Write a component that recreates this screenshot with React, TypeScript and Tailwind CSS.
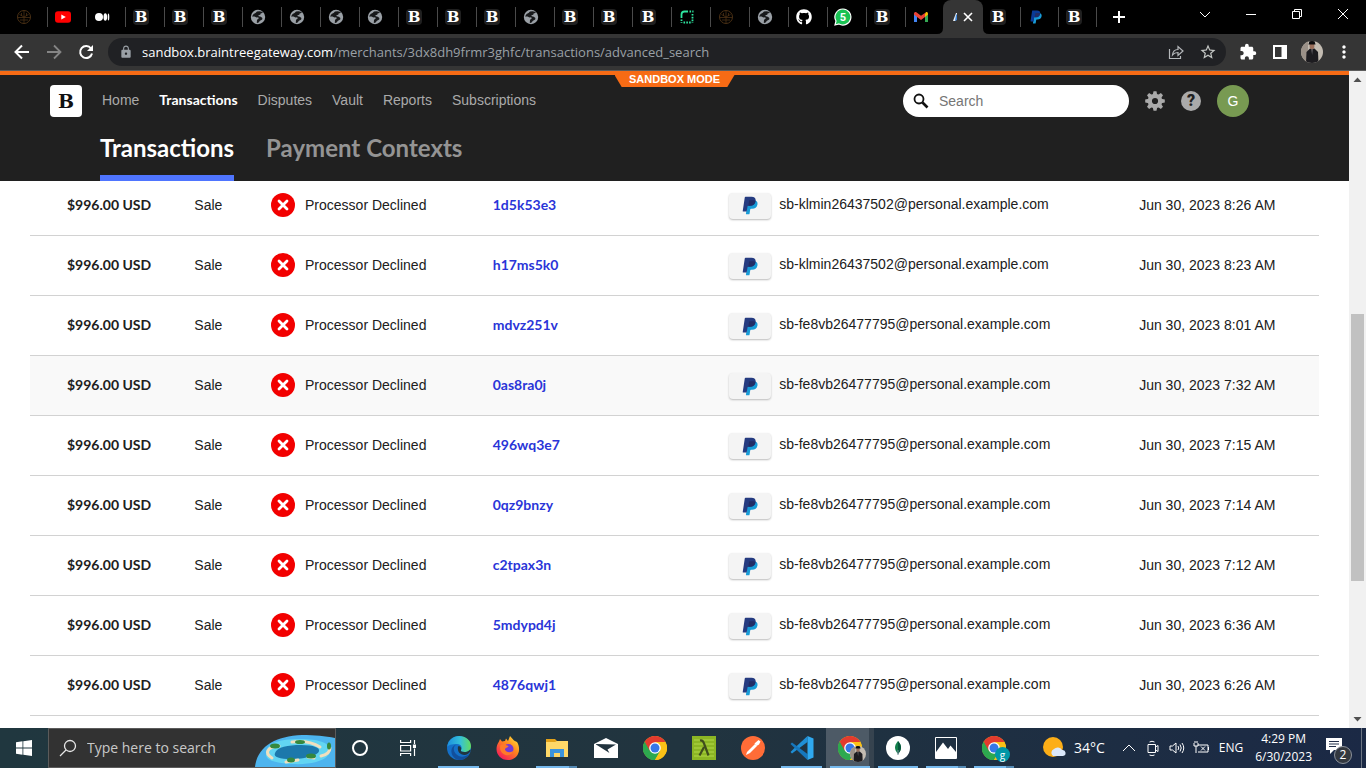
import React from "react";
import { FaGithub } from "react-icons/fa";
import { MdExtension, MdLock, MdMoreVert, MdStarBorder } from "react-icons/md";

type Kind =
  | "dark" | "youtube" | "medium" | "b" | "globe" | "dots" | "github" | "whatsapp" | "gmail" | "paypal";

const leftTabs: Kind[] = [
  "dark", "youtube", "medium", "b", "b", "b", "globe", "globe", "globe", "globe", "b", "b",
  "b", "globe", "b", "b", "b", "dots", "dark", "globe", "github", "whatsapp", "b", "gmail",
];
const rightTabs: Kind[] = ["b", "paypal", "b"];

const k = "sb-klmin26437502@personal.example.com";
const f = "sb-fe8vb26477795@personal.example.com";
const rows = [
  { id: "1d5k53e3", mail: k, time: "8:26 AM" },
  { id: "h17ms5k0", mail: k, time: "8:23 AM" },
  { id: "mdvz251v", mail: f, time: "8:01 AM" },
  { id: "0as8ra0j", mail: f, time: "7:32 AM", hovered: true },
  { id: "496wq3e7", mail: f, time: "7:15 AM" },
  { id: "0qz9bnzy", mail: f, time: "7:14 AM" },
  { id: "c2tpax3n", mail: f, time: "7:12 AM" },
  { id: "5mdypd4j", mail: f, time: "6:36 AM" },
  { id: "4876qwj1", mail: f, time: "6:26 AM" },
];

function PayPal({ className, dark = "#253b80" }: { className?: string; dark?: string }) {
  return (
    <svg viewBox="0 0 24 28" className={className} aria-hidden="true">
      <path d="M9 6h8.500c4.500 0 6.500 2.500 5.700 6.500-.9 4.500-3.800 6.300-8 6.300h-1.700c-.6 0-1 .4-1.100 1l-1.100 6.500c-.1.500-.5.900-1 .9H6.600c-.5 0-.8-.4-.7-.9z" fill="#179bd7" />
      <path d="M5.200 1h9c4.300 0 6.800 2 6.200 6.300-.7 5-3.900 7.200-8.600 7.200H9.400c-.6 0-1 .4-1.100 1L7 23H1.800c-.5 0-.8-.4-.7-.9L4.200 1.800c.1-.5.500-.8 1-.8z" fill={dark} />
      <path d="M10.800 6h6.500c1.300 0 2.300.3 3.100.7-.7 5-3.700 7.800-8.600 7.800H9.500z" fill="#222d65" />
    </svg>
  );
}

function Favicon({ kind }: { kind: Kind }) {
  switch (kind) {
    case "b":
      return (
        <span className="flex size-4 items-center justify-center rounded-sm bg-[#202020] font-['DejaVu_Serif',serif] text-[15px] leading-4 font-bold text-white">
          B
        </span>
      );
    case "youtube":
      return (
        <svg viewBox="0 0 16 16" className="size-4">
          <rect y="2.200" width="16" height="11.600" rx="3" fill="#f00" />
          <path d="m6.300 5.500 4.500 2.500-4.500 2.500z" fill="#fff" />
        </svg>
      );
    case "paypal":
      return <PayPal className="h-3.5 w-4" dark="#0a3a96" />;
    case "github":
      return <FaGithub className="size-4 text-white" />;
    case "medium":
      return (
        <svg viewBox="0 0 16 16" className="size-4">
          <circle cx="5" cy="8" r="4" fill="#fff" />
          <ellipse cx="11.300" cy="8" rx="1.800" ry="3.800" fill="#fff" />
          <ellipse cx="14.500" cy="8" rx=".8" ry="3.500" fill="#fff" />
        </svg>
      );
    case "globe":
      return (
        <svg viewBox="0 0 16 16" className="size-4">
          <circle cx="8" cy="8" r="7.200" fill="#9aa0a6" />
          <path d="M9.500 2.200 7 2.400 5.500 4 3.600 5 2 7.500l2.500.1 2 .9 1.800-.2.300 1.500-1.600 1-.2 3.200 1.500-.2 1.700-2 2.200-1.200.2-1.600-1.600-1.300-2-.4-.5-1.100 2-.4.300-1.200 1.600-.5.700-1.200z" fill="#17181a" />
        </svg>
      );
    case "dark":
      return (
        <svg viewBox="0 0 16 16" className="size-4" fill="none" stroke="#4a3014">
          <circle cx="8" cy="8" r="6.500" />
          <path d="M8 2v12M2 8.500h12M3.500 5.500 8 8l4.500-2.500M4 11h8M5.500 4v3M10.500 4v3" strokeWidth=".8" />
        </svg>
      );
    case "dots":
      return (
        <svg viewBox="0 0 16 16" className="size-4" fill="none" stroke="#2ee6a0" strokeWidth="1.800">
          <path d="M2.500 9V5.500q0-3 3-3H9" />
          <path d="M10.500 2.500h4M13.500 5v9M2.500 10.500V14M4.500 13.500H13" strokeDasharray="1.600 1.200" />
        </svg>
      );
    case "whatsapp":
      return (
        <svg viewBox="0 0 18 18" className="-ml-px size-[18px] shrink-0">
          <path d="M9 1a8 8 0 1 1-4 15L1 17l1-4A8 8 0 0 1 9 1z" fill="#19c253" stroke="#fff" strokeWidth="1.200" />
          <text x="9" y="13" textAnchor="middle" fill="#fff" fontSize="11" fontWeight="700" fontFamily="Roboto, sans-serif">5</text>
        </svg>
      );
    case "gmail":
      return (
        <svg viewBox="0 0 16 16" className="size-4">
          <path d="M1 4.500v8.500h3V7z" fill="#4285f4" />
          <path d="M15 4.500v8.500h-3V7z" fill="#34a853" />
          <path d="M12 4.500 13 3q2-.5 2 1.500v1L12 8z" fill="#fbbc04" />
          <path d="M1 5.500v-1Q1 2.500 3 3l5 3.800L12 4v4l-4 3-4-3z" fill="#ea4335" />
        </svg>
      );
  }
}

function Tab({ kind, narrow, last }: { kind: Kind; narrow?: boolean; last?: boolean }) {
  return (
    <button
      aria-label={`${kind} tab`}
      className={`flex h-5 shrink-0 items-center border-r pl-[7px] ${narrow ? "w-[38px]" : "w-[39px]"} ${last ? "border-transparent" : "border-[#4a4a4a]"}`}
    >
      <Favicon kind={kind} />
    </button>
  );
}

function Portrait({ className }: { className?: string }) {
  return (
    <svg viewBox="0 0 22 22" className={className} aria-hidden="true">
      <defs><clipPath id="portrait"><circle cx="11" cy="11" r="11" /></clipPath></defs>
      <g clipPath="url(#portrait)">
        <path d="M0 0h22v22H0z" fill="#c3bcb2" />
        <path d="M0 0h7v22H0z" fill="#9b9188" />
        <path d="M5 22 5.500 11 9 7.500h4.500L17 11l.5 11z" fill="#1d1c20" />
        <ellipse cx="11" cy="5" rx="2.400" ry="3.200" fill="#9a6f5b" />
        <path d="M7.500 3.500 8.500 0h5l1 3.500z" fill="#0c0c0e" />
        <path d="m10 8 1.200 6L12 8z" fill="#59565a" />
      </g>
    </svg>
  );
}

function BrowserChrome() {
  return (
    <>
      <div className="flex h-[34px] shrink-0 items-center bg-black pl-[9px]">
        {leftTabs.map((kind, i) => (
          <Tab key={i} kind={kind} last={i === leftTabs.length - 1} />
        ))}
        <div className="-ml-2 flex h-full shrink-0 items-end">
          <svg viewBox="0 0 6 6" className="size-[6px] shrink-0"><path d="M6 0v6H0q6 0 6-6" fill="#353535" /></svg>
          <div className="flex h-full w-10 shrink-0 items-center justify-center gap-1.5 rounded-t-lg bg-[#353535]">
            <svg viewBox="0 0 4 10" className="h-2.5 w-1"><path d="M0 9 3 1h1v3L2.500 9z" fill="#e8eef5" /><path d="m3 3 1-1v6l-2 1z" fill="#3b82d6" /></svg>
            <button aria-label="Close tab">
              <svg viewBox="0 0 10 10" className="size-[10px]"><path d="m1 1 8 8M9 1 1 9" stroke="#fff" strokeWidth="1.600" /></svg>
            </button>
          </div>
          <svg viewBox="0 0 6 6" className="size-[6px] shrink-0"><path d="M0 0v6h6q-6 0-6-6" fill="#353535" /></svg>
        </div>
        <div className="-ml-1.5 flex">
          {rightTabs.map((kind, i) => <Tab key={i} kind={kind} narrow />)}
        </div>
        <button aria-label="New tab" className="flex w-11 justify-center">
          <svg viewBox="0 0 12 12" className="size-3"><path d="M6 0v12M0 6h12" stroke="#fff" strokeWidth="2" /></svg>
        </button>
        <div className="ml-auto flex h-7 self-start">
          {[
            ["Search tabs", "m1 4 5 5 5-5"],
            ["Minimize", "M1 6.500h10"],
            ["Restore", "M1.500 3.500h7v7h-7zM3.500 3.500v-2h7v7h-2"],
            ["Close", "m1 1 10 10M11 1 1 11"],
          ].map(([label, d]) => (
            <button key={label} aria-label={label} className="flex w-[46px] items-center justify-center">
              <svg viewBox="0 0 12 12" className="size-3" fill="none" stroke="#fff"><path d={d} /></svg>
            </button>
          ))}
        </div>
      </div>
      <div className="flex h-[37px] shrink-0 items-center border-b border-[#5c5c5c] bg-[#353535] px-1.5 text-white">
        <button aria-label="Back" className="flex w-8 justify-center">
          <svg viewBox="0 0 16 16" className="size-4" fill="none" stroke="#fff" strokeWidth="2"><path d="M15 8H2M8 1.500 1.500 8 8 14.500" /></svg>
        </button>
        <button aria-label="Forward" className="flex w-8 justify-center">
          <svg viewBox="0 0 16 16" className="size-4" fill="none" stroke="#858585" strokeWidth="1.800"><path d="M1 8h13M8 1.500 14.500 8 8 14.500" /></svg>
        </button>
        <button aria-label="Reload" className="flex w-8 justify-center">
          <svg viewBox="0 0 16 16" className="size-4"><path d="M13 4.500A6 6 0 1 0 14 9.500" fill="none" stroke="#fff" strokeWidth="2" /><path d="M15 1v6H9z" fill="#fff" /></svg>
        </button>
        <div className="ml-1.5 flex h-7 flex-1 items-center rounded-full bg-[#202124] pr-2.5 pl-2.5">
          <MdLock className="size-4 p-px text-[#9aa0a6]" />
          <p className="ml-2 flex-1 font-['Open_Sans','Noto_Sans',sans-serif] text-[13px] leading-5 whitespace-nowrap text-[#9aa0a6]">
            <span className="text-white">sandbox.braintreegateway.com</span>/merchants/3dx8dh9frmr3ghfc/transactions/advanced_search
          </p>
          <button aria-label="Share" className="flex w-8 justify-center">
            <svg viewBox="0 0 16 16" className="size-4" fill="none" stroke="#b5b8bb" strokeWidth="1.200"><path d="M1.500 5v9.500h11V12M4.500 11Q5 5.500 10 5.500v-3L15 7l-5 4.500v-3Q6.500 8.500 4.500 11z" /></svg>
          </button>
          <button aria-label="Bookmark" className="-mr-2 flex w-8 justify-center"><MdStarBorder className="size-[18px] text-[#c4c7c5]" /></button>
        </div>
        <div className="ml-1.5 flex">
          <button aria-label="Extensions" className="flex w-8 items-center justify-center"><MdExtension className="size-[18px]" /></button>
          <button aria-label="Side panel" className="flex w-8 items-center justify-center">
            <svg viewBox="0 0 14 14" className="size-3.5"><path d="M1 1h12v12H1z" fill="none" stroke="#fff" strokeWidth="2" /><path d="M8.500 1H13v12H8.500z" fill="#fff" /></svg>
          </button>
          <button aria-label="Profile" className="flex w-8 justify-center"><Portrait className="size-[22px]" /></button>
          <button aria-label="Menu" className="flex w-8 items-center justify-center"><MdMoreVert className="size-5" /></button>
        </div>
      </div>
    </>
  );
}

const teeth = [0, 45, 90, 135, 180, 225, 270, 315];

function Header() {
  return (
    <header className="relative border-t-4 border-[#f76b15] bg-[#202020]">
      <div className="absolute inset-x-0 top-0 mx-auto h-3 w-[120px] bg-[#f76b15] text-center text-[11px] leading-[9px] font-bold text-white [clip-path:polygon(0_0,100%_0,94%_100%,6%_100%)]">
        SANDBOX MODE
      </div>
      <div className="flex items-center pt-2.5 pr-[100px] pl-[50px]">
        <a href="#home" aria-label="Braintree" className="flex size-8 items-center justify-center rounded bg-white font-['DejaVu_Serif',serif] text-[19px] font-bold text-[#111]">
          B
        </a>
        <nav className="ml-5 flex gap-5 pb-0.5 text-[14px] leading-5 text-[#aaa]">
          <a href="#home">Home</a>
          <a href="#transactions" className="font-['Lato',sans-serif] font-bold text-white">Transactions</a>
          <a href="#disputes">Disputes</a>
          <a href="#vault">Vault</a>
          <a href="#reports">Reports</a>
          <a href="#subscriptions">Subscriptions</a>
        </nav>
        <label className="ml-auto flex h-8 w-[226px] items-center rounded-full bg-white pl-2.5">
          <svg viewBox="0 0 16 16" className="size-4 shrink-0" fill="none" stroke="#111"><circle cx="6" cy="6" r="4.500" strokeWidth="1.800" /><path d="m9.500 9.500 5 5" strokeWidth="2.600" /></svg>
          <input type="search" aria-label="Search" placeholder="Search" className="ml-2.5 w-40 text-[14px] leading-5 outline-none placeholder:text-[#757575]" />
        </label>
        <button aria-label="Settings" className="ml-4">
          <svg viewBox="0 0 20 20" className="size-5">
            <circle cx="10" cy="10" r="5.200" fill="none" stroke="#aaa" strokeWidth="4.200" />
            {teeth.map((a) => (
              <path key={a} d="M7.800 3.800 8.500.2h3l.7 3.600z" fill="#aaa" transform={`rotate(${a} 10 10)`} />
            ))}
          </svg>
        </button>
        <button aria-label="Help" className="ml-4 flex size-5 items-center justify-center rounded-full bg-[#aaa] font-['Roboto',sans-serif] text-[16px] leading-5 font-black text-[#202020]">
          ?
        </button>
        <button aria-label="Account" className="ml-4 size-8 rounded-full bg-[#789a52] text-[14px] text-white">G</button>
      </div>
      <div className="flex gap-8 pt-3 pl-[100px] font-['Lato',sans-serif] text-2xl font-bold">
        <a href="#transactions" className="border-b-6 border-[#4f75ff] pt-0.5 pb-2.5 leading-[34px] text-white">Transactions</a>
        <a href="#contexts" className="pt-0.5 leading-[34px] text-[#949494]">Payment Contexts</a>
      </div>
    </header>
  );
}

function TransactionTable() {
  return (
    <div className="min-h-0 flex-1 overflow-hidden bg-white px-[30px]">
      <table className="-mt-[6px] w-full table-fixed border-collapse text-left text-[14px] leading-5 text-[#202020]">
        <colgroup>
          <col className="w-[12.75%]" />
          <col className="w-[5.95%]" />
          <col className="w-[17.2%]" />
          <col className="w-[18.35%]" />
          <col className="w-[31.8%]" />
          <col />
        </colgroup>
        <tbody>
          {rows.map((r) => (
            <tr key={r.id} className={`h-[60px] border-b border-[#d2d2d2] ${r.hovered ? "bg-[#f9f9f9]" : ""}`}>
              <td className="pl-[37px] font-['Lato',sans-serif] font-bold">$996.00 USD</td>
              <td>Sale</td>
              <td>
                <div className="flex items-center gap-2.5">
                  <svg viewBox="0 0 24 24" className="size-6"><circle cx="12" cy="12" r="12" fill="#f20000" /><path d="m8 8 8 8m0-8-8 8" stroke="#fff" strokeWidth="2.800" strokeLinecap="round" /></svg>
                  Processor Declined
                </div>
              </td>
              <td>
                <a href={`#${r.id}`} className="font-['Lato',sans-serif] font-bold text-[#2a35d8]">{r.id}</a>
              </td>
              <td>
                <div className="flex items-center gap-2 pt-0.5">
                  <span className="flex h-[26px] w-[42px] items-center justify-center rounded bg-[#f4f4f4] shadow-[0_1px_2px_#bbb]">
                    <PayPal className="h-[19px] w-4" />
                  </span>
                  <span className="pb-1">{r.mail}</span>
                </div>
              </td>
              <td>Jun 30, 2023 {r.time}</td>
            </tr>
          ))}
        </tbody>
      </table>
    </div>
  );
}

function Scrollbar() {
  return (
    <div className="flex w-[17px] shrink-0 flex-col items-center bg-[#f1f1f1]">
      <svg viewBox="0 0 17 17" className="size-[17px]"><path d="m4.500 11 4-4.500 4 4.500z" fill="#505050" /></svg>
      <div className="flex-[226]" />
      <div className="w-[13px] flex-[267] bg-[#c1c1c1]" />
      <div className="flex-[130]" />
      <svg viewBox="0 0 17 17" className="size-[17px]"><path d="m4.500 6 4 4.500 4-4.500z" fill="#505050" /></svg>
    </div>
  );
}

function Chrome({ badge }: { badge?: "portrait" | "g" }) {
  return (
    <span className="relative">
      <svg viewBox="0 0 24 24" className="size-6">
        <circle cx="12" cy="12" r="12" fill="#fbc116" />
        <path d="M12 12 1.600 6A12 12 0 0 1 22.400 6z" fill="#e33b2e" />
        <path d="M1.600 6A12 12 0 0 0 12 24l5.200-9L12 12z" fill="#2da94f" />
        <path d="M12 6h10.400A12 12 0 0 1 12 24l5.200-9z" fill="#fbc116" />
        <path d="M12 6.500H3L1.600 6 6.800 15z" fill="#e33b2e" />
        <path d="M1.600 6 6.800 15 12 18v6A12 12 0 0 1 1.600 6z" fill="#2da94f" />
        <circle cx="12" cy="12" r="5.800" fill="#fff" />
        <circle cx="12" cy="12" r="4.500" fill="#3777e8" />
      </svg>
      {badge === "portrait" && <Portrait className="absolute -right-1 -bottom-0.5 size-4" />}
      {badge === "g" && (
        <span className="absolute -right-1 -bottom-0.5 flex size-[15px] items-center justify-center rounded-full bg-[#0097a7] text-[10px] leading-3 text-white">g</span>
      )}
    </span>
  );
}

const apps: { name: string; state?: "open" | "many" | "active"; compact?: boolean; icon: React.ReactNode }[] = [
  {
    name: "Edge", state: "open",
    icon: (
      <svg viewBox="0 0 24 24" className="size-6">
        <defs>
          <linearGradient id="edge" x1="0" x2="1"><stop stopColor="#1b8fe0" /><stop offset=".55" stopColor="#35c1d8" /><stop offset="1" stopColor="#63dc60" /></linearGradient>
        </defs>
        <circle cx="12" cy="12" r="12" fill="#1470c8" />
        <path d="M.2 11C1 4 6 0 12 0c7 0 12 4.500 12 10 0 4-3 6-6.500 6-3 0-4-1-3.500-2 1.500-2 .5-6-4-6C5 8 1 9 .2 11z" fill="url(#edge)" />
        <path d="M9.500 8.500C6 10 6 15 9 18s8 4 13 0c-2 4-6 6-10 6C6 23 3 17 5 12q1.500-3 4.500-3.500z" fill="#124f9c" />
        <path d="M11 10.500c2-1 4 1.500 3 3.500-.5 1 .5 2 3.500 2 2 0 4-.7 5.400-2.300l.9.600q-1.800 4.300-5.800 4.600c-4.500.3-8-3-7-8.400z" fill="#21363f" />
      </svg>
    ),
  },
  {
    name: "Firefox",
    icon: (
      <svg viewBox="0 0 24 24" className="size-6">
        <defs>
          <linearGradient id="fox" x1="1" y1="0" x2=".2" y2="1"><stop stopColor="#fff044" /><stop offset=".45" stopColor="#ff8a1c" /><stop offset="1" stopColor="#f5155c" /></linearGradient>
        </defs>
        <path d="M3 5.500 4 3l2 2.500 3-.5 1-2.500L12 5l2-5 4 4.500L21 6c2 3 3 8 1 12-2 4-6 6-10 6C5 24 .5 19 .5 13c0-3 1-5 2.500-7.500z" fill="url(#fox)" />
        <circle cx="12.500" cy="13" r="5" fill="#7139d6" />
        <path d="M4.500 9c4-2 5 .5 8 1-.5 2-3.500 1.500-3.500 3.500 1 3 5 3.500 8 1.500-1 4-6 5.500-9.500 3S3.500 12 4.500 9z" fill="#ff7a28" />
      </svg>
    ),
  },
  {
    name: "File Explorer", state: "many",
    icon: (
      <svg viewBox="0 0 24 24" className="size-6">
        <path d="M1 3h9l2 2h11v16H1z" fill="#e3a21a" /><path d="M1 6h9l2-1h11v16H1z" fill="#ffd868" />
        <path d="M5 13h14v8h-4v-4H9v4H5z" fill="#3c94dc" />
      </svg>
    ),
  },
  {
    name: "Mail",
    icon: (
      <svg viewBox="0 0 24 20" className="h-5 w-6"><path d="M0 6 12 0l12 6v14H0z" fill="#fff" /><path d="m2 6 20 .5-8.500 5 2 3.500L2 6.500z" fill="#22343f" /></svg>
    ),
  },
  { name: "Chrome", icon: <Chrome /> },
  {
    name: "Lambda editor",
    icon: (
      <svg viewBox="0 0 24 24" className="size-6">
        <path d="M0 0h24v24H0z" fill="#8cb624" /><path d="M2 4h20M2 8h20M2 12h20M2 16h20M2 20h20" stroke="#a5cd3c" strokeWidth="1.500" />
        <path d="M8 4.500q3-.5 4 3l4.500 12M12 11l-4.500 8.500" fill="none" stroke="#3f4d1d" strokeWidth="2.200" />
      </svg>
    ),
  },
  {
    name: "Postman",
    icon: (
      <svg viewBox="0 0 24 24" className="size-6"><circle cx="12" cy="12" r="12" fill="#ff6c37" /><path d="m5 19 1-3 8-8 2 2-7 7z" fill="#fff" /><path d="m13.500 7.500 2 2.500 2.500-1.500 1.500-3-2-1.500z" fill="#fff" /></svg>
    ),
  },
  {
    name: "Code", state: "open",
    icon: (
      <svg viewBox="0 0 24 24" className="size-6"><path d="M17.500 0 4 12.500.5 16 2 17.500 17.500 6z" fill="#1f8fd6" /><path d="M17.500 24 .5 8 2 6.500 17.500 18z" fill="#1677bd" /><path d="m17.500 0 6 2.500v19l-6 2.500z" fill="#2fa9f0" /></svg>
    ),
  },
  { name: "Chrome profile", state: "active", compact: true, icon: <Chrome badge="portrait" /> },
  {
    name: "MongoDB Compass", state: "open", compact: true,
    icon: (
      <svg viewBox="0 0 24 24" className="size-6"><circle cx="12" cy="12" r="12" fill="#fff" /><path d="M12 5c4 4.500 4 8.500 0 13-4-4.500-4-8.500 0-13z" fill="#13804c" /><path d="M12 5c4 4.500 4 8.500 0 13z" fill="#07573c" /><path d="M12 14v5" stroke="#789" /></svg>
    ),
  },
  {
    name: "Photos", state: "many", compact: true,
    icon: (
      <svg viewBox="0 0 24 24" className="size-6"><path d="M1.500 1.500h21v21h-21z" fill="none" stroke="#fff" /><path d="M2 16 9 6.500l5 6.500 2.500-3.500L22 16v6H2z" fill="#fff" /></svg>
    ),
  },
  { name: "Chrome G", state: "many", compact: true, icon: <Chrome badge="g" /> },
];

function Taskbar() {
  return (
    <footer className="flex h-10 shrink-0 items-stretch bg-linear-to-r from-[#20373f] via-[#21343f] to-[#1b2945] font-['Open_Sans','Noto_Sans',sans-serif] text-white">
      <button aria-label="Start" className="flex w-12 shrink-0 items-center justify-center">
        <svg viewBox="0 0 16 16" className="size-4" fill="#fff"><path d="M0 2.200 6.500 1.300v6.200H0zM7.300 1.200 16 0v7.500H7.300zM0 8.400h6.500v6.300L0 13.800zM7.300 8.400H16V16l-8.700-1.200z" /></svg>
      </button>
      <label className="flex w-72 shrink-0 items-center border border-[#5b5b5b] bg-[#323232] pl-2.5">
        <svg viewBox="0 0 18 18" className="size-[18px] shrink-0" fill="none" stroke="#e6e6e6" strokeWidth="1.300"><circle cx="11" cy="7" r="5.500" /><path d="m7 11-6 6" /></svg>
        <input aria-label="Search Windows" placeholder="Type here to search" className="ml-2.5 w-40 min-w-0 flex-1 text-[14px] leading-5 outline-none placeholder:text-[#c9c9c9]" />
        <svg viewBox="0 0 80 32" className="h-8 w-20 shrink-0 self-end">
          <path d="M0 32C2 12 20 1 47 0c13 0 23 1 33 3v29z" fill="#4db4ee" />
          <path d="M11 18C12 6 30 4 46 4c17 0 30 4 29 12-1 9-18 14-37 13C21 28 10 26 11 18z" fill="#62d5f2" />
          <path d="M20 18C22 12 33 10 46 10c13 0 19 3 18 6-1 5-15 8-28 8-11 0-18-2-16-6z" fill="#1c78ab" />
          <g fill="none" stroke="#f1dfbd" strokeWidth="3" strokeLinecap="round"><path d="M24 11C12 12 9 18 17 23M37 7q17-2 28 5M75 13q0 6-9 8M31 27l12-2M53 22l6 1" /></g>
          <g fill="#35883e"><ellipse cx="20" cy="11" rx="5" ry="2.500" /><ellipse cx="45" cy="7" rx="5" ry="2" /><ellipse cx="74" cy="11" rx="2" ry="3.500" /><ellipse cx="36" cy="25" rx="4" ry="2.500" /><ellipse cx="56" cy="21" rx="5" ry="2.500" /></g>
        </svg>
      </label>
      <button aria-label="Cortana" className="flex w-12 shrink-0 items-center justify-center"><span className="size-4 rounded-full border-2 border-white" /></button>
      <button aria-label="Task view" className="flex w-12 shrink-0 items-center justify-center">
        <svg viewBox="0 0 16 16" className="size-4" fill="none" stroke="#fff" strokeWidth="1.200"><path d="M.6 0v2.500h10V0M.6 16v-2.500h10V16M.6 5.500h10v5.500H.6zM14.500 0v4M14.500 8.500V16" /><path d="M13.500 5h2v2.500h-2z" fill="#fff" /></svg>
      </button>
      <div className="ml-0.5 flex">
        {apps.map((a) => (
          <button
            key={a.name}
            aria-label={a.name}
            className={`relative flex items-center justify-center ${a.compact ? "w-12" : "w-[49px]"} ${a.state === "active" ? "bg-linear-to-r from-[#4d5a66] from-90% to-[#36434f] to-90%" : ""}`}
          >
            {a.icon}
            {a.state && <span className="absolute inset-x-1 bottom-0 h-0.5 bg-[#76b9ed]" />}
            {a.state === "many" && <span className="absolute right-1 bottom-0 h-0.5 w-2 bg-[#5489b3]" />}
          </button>
        ))}
      </div>
      <div className="ml-auto flex shrink-0 items-center">
        <button className="flex items-center gap-2 text-[14px] leading-5">
          <svg viewBox="0 0 24 24" className="size-6"><circle cx="11" cy="11" r="10" fill="#fcae17" /><path d="M11 20a4 4 0 0 1 1-7 5 5 0 0 1 8 1 3 3 0 0 1 1 6z" fill="#dbe8fa" /></svg>
          34°C
        </button>
        <div className="ml-3 flex">
          {[
            ["Show hidden icons", "m2 11 6-6 6 6"],
            ["Meet now", "M3 4.500h7.500v8H3zM10.500 7 13 5.500v6L10.500 10M4.500 2q2.500-1.500 5 0M4.500 15q2.500 1.500 5 0"],
            ["Volume", "M1 6h2.500L7 3v10l-3.500-3H1zM9 6q1.500 2 0 4M11 4.500q2.500 3.500 0 7M13 3q3.500 5 0 10"],
            ["Battery", "M5 5h10v7H5M15.500 7v3M8 6.500l4 4m0-4-4 4M1 3v3h4V3M2 1v2m2-2v2M3 6v7"],
          ].map(([label, d]) => (
            <button key={label} aria-label={label} className="flex w-6 justify-center">
              <svg viewBox="0 0 16 16" className="size-4" fill="none" stroke="#fff"><path d={d} /></svg>
            </button>
          ))}
        </div>
        <span className="ml-1.5 text-[12px] leading-5">ENG</span>
        <div className="ml-3 text-center text-[12px] leading-[18px] whitespace-nowrap">4:29 PM<br />6/30/2023</div>
        <button aria-label="Notifications" className="relative mr-1 ml-2 flex h-10 w-[42px] items-center pl-1.5">
          <svg viewBox="0 0 16 16" className="mb-1 size-4"><path d="M0 0h16v12H8l-4 4v-4H0z" fill="#fff" /><path d="M3 3.500h10M3 6h10M3 8.500h7" stroke="#23304a" /></svg>
          <span className="absolute bottom-1 left-3.5 flex size-[18px] items-center justify-center rounded-full border border-[#8d939c] bg-[#33383f] text-[12px] leading-3">2</span>
          <span className="absolute inset-y-0 right-0 w-px bg-[#6c7583]" />
        </button>
      </div>
    </footer>
  );
}

export default function App() {
  return (
    <div className="flex h-screen flex-col overflow-hidden font-['Liberation_Sans',Arial,sans-serif]">
      <BrowserChrome />
      <main className="flex min-h-0 flex-1">
        <div className="flex min-w-0 flex-1 flex-col">
          <Header />
          <TransactionTable />
        </div>
        <Scrollbar />
      </main>
      <Taskbar />
    </div>
  );
}
